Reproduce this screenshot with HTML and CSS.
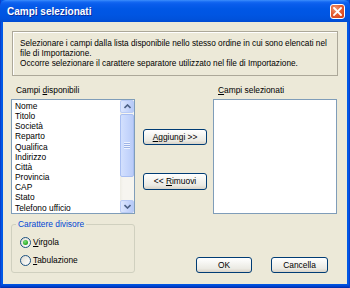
FILE: index.html
```html
<!DOCTYPE html>
<html>
<head>
<meta charset="utf-8">
<link rel="stylesheet" href="styles.css">
</head>
<body>
<div class="window">
  <div class="titlebar">
    <span class="title">Campi selezionati</span>
    <span class="close">
      <svg width="9" height="9" viewBox="0 0 9 9"><path d="M1 1 L8 8 M8 1 L1 8" stroke="#fff" stroke-width="1.8" stroke-linecap="square"/></svg>
    </span>
  </div>
  <div class="client">
    <div class="info">
      Selezionare i campi dalla lista disponibile nello stesso ordine in cui sono elencati nel<br>
      file di Importazione.<br>
      Occorre selezionare il carattere separatore utilizzato nel file di Importazione.
    </div>
    <div class="lists">
      <div class="col">
        <div class="label">Campi <u>d</u>isponibili</div>
        <div class="listbox">
          <ul class="items">
            <li>Nome</li>
            <li>Titolo</li>
            <li>Società</li>
            <li>Reparto</li>
            <li>Qualifica</li>
            <li>Indirizzo</li>
            <li>Città</li>
            <li>Provincia</li>
            <li>CAP</li>
            <li>Stato</li>
            <li>Telefono ufficio</li>
          </ul>
          <div class="scrollbar">
            <div class="sbtn"><svg width="7" height="5" viewBox="0 0 7 5"><path d="M0.5 4 L3.5 1 L6.5 4" fill="none" stroke="#4D6185" stroke-width="1.6"/></svg></div>
            <div class="thumb"><span class="grip"></span></div>
            <div class="track"></div>
            <div class="sbtn"><svg width="7" height="5" viewBox="0 0 7 5"><path d="M0.5 1 L3.5 4 L6.5 1" fill="none" stroke="#4D6185" stroke-width="1.6"/></svg></div>
          </div>
        </div>
      </div>
      <div class="mid">
        <button class="btn add"><u>A</u>ggiungi &gt;&gt;</button>
        <button class="btn remove">&lt;&lt; <u>R</u>imuovi</button>
      </div>
      <div class="col">
        <div class="label"><u>C</u>ampi selezionati</div>
        <div class="listbox"></div>
      </div>
    </div>
    <div class="bottom">
      <fieldset class="group">
        <legend>Carattere divisore</legend>
        <div class="radio"><span class="dot checked"></span><span><u>V</u>irgola</span></div>
        <div class="radio"><span class="dot"></span><span><u>T</u>abulazione</span></div>
      </fieldset>
      <div class="actions">
        <button class="btn ok">OK</button>
        <button class="btn cancel">Cancella</button>
      </div>
    </div>
  </div>
</div>
</body>
</html>
```
FILE: styles.css
```css
html, body {
  margin: 0;
  padding: 0;
  background: #ffffff;
}

.window {
  width: 350px;
  height: 288px;
  box-sizing: border-box;
  padding: 0 3px 4px 3px;
  background: linear-gradient(to bottom, #0058E6 0, #0058E6 284px, #0046D2 286px, #0029A8 288px);
  box-shadow: inset 1px 0 0 #0A3FCC, inset -1px 0 0 #0A3FCC;
  display: flex;
  flex-direction: column;
  font-family: "Liberation Sans", Arial, sans-serif;
  font-size: 8.4px;
  color: #000;
}

.titlebar {
  height: 22px;
  margin: 0 -3px;
  padding: 0 5px 0 7px;
  display: flex;
  align-items: center;
  justify-content: space-between;
  background: linear-gradient(to bottom, #3D8EFC 0, #1468F2 2px, #0A5DEC 4px, #0057E5 9px, #0055E2 15px, #0052DC 19px, #004BD2 22px);
  border-radius: 6px 6px 0 0;
}

.title {
  color: #fff;
  font-weight: bold;
  font-size: 10px;
  line-height: 12px;
  padding-top: 1px;
  text-shadow: 1px 1px 0 #0B2E9E;
}

.close {
  width: 13px;
  height: 13px;
  border: 1px solid #fff;
  border-radius: 3px;
  background: radial-gradient(circle at 35% 30%, #F09A74 0, #E45E33 45%, #D9471E 80%, #C5391A 100%);
  display: flex;
  align-items: center;
  justify-content: center;
  margin-top: 1px;
}

.client {
  flex: 1;
  background: #ECE9D8;
  padding-top: 9px;
  display: flex;
  flex-direction: column;
}

.info {
  margin: 0 9px;
  height: 45px;
  box-sizing: border-box;
  border: 1px solid #ACA899;
  box-shadow: inset 1px 1px 0 #ffffff;
  padding: 7px 0 0 7px;
  font-size: 8.25px;
  line-height: 10.2px;
  white-space: nowrap;
}

.lists {
  display: flex;
  margin: 8px 0 0 8px;
}

.col {
  width: 124px;
  display: flex;
  flex-direction: column;
}

.label {
  line-height: 12px;
  height: 12px;
  padding-left: 5px;
  margin-bottom: 3px;
}

.listbox {
  height: 115px;
  box-sizing: border-box;
  border: 1px solid #7F9DB9;
  background: #fff;
  display: flex;
}

.items {
  flex: 1;
  list-style: none;
  margin: 0;
  padding: 1px 0 0 3px;
  line-height: 10.15px;
  overflow: hidden;
}

.scrollbar {
  width: 14px;
  display: flex;
  flex-direction: column;
  background: linear-gradient(to right, #EEEDE5 0, #F6F5F0 3px, #F6F5F0 100%);
}

.sbtn {
  height: 13px;
  box-sizing: border-box;
  border: 1px solid #B9CBF5;
  border-radius: 2px;
  background: linear-gradient(to right, #DCE6FD 0, #C6D5FB 60%, #B6C9F7 100%);
  display: flex;
  align-items: center;
  justify-content: center;
}

.thumb {
  height: 63px;
  box-sizing: border-box;
  margin-top: 1px;
  border: 1px solid #A9BFF2;
  border-radius: 2px;
  background: linear-gradient(to right, #D3E0FD 0, #C6D6FC 50%, #BACCF8 100%);
  display: flex;
  align-items: center;
  justify-content: center;
}

.grip {
  width: 6px;
  height: 7px;
  background: repeating-linear-gradient(to bottom, #EEF3FF 0, #EEF3FF 1px, #9DB3E6 1px, #9DB3E6 2px);
}

.track {
  flex: 1;
}

.mid {
  width: 64px;
  margin: 0 6px 0 8px;
  display: flex;
  flex-direction: column;
}

.btn {
  font-family: "Liberation Sans", Arial, sans-serif;
  font-size: 8.4px;
  color: #000;
  height: 16px;
  box-sizing: border-box;
  border: 1px solid #003C74;
  border-radius: 3px;
  padding: 0;
  background: linear-gradient(to bottom, #FFFFFF 0, #F7F7F4 30%, #EBEAE3 75%, #D8D3C8 100%);
  line-height: 13px;
  text-align: center;
}

.add {
  margin-top: 45px;
  width: 64px;
}

.remove {
  margin-top: 28px;
  width: 64px;
  height: 17px;
}

.bottom {
  display: flex;
  align-items: flex-end;
  margin: 4px 0 0 8px;
}

.group {
  width: 124px;
  height: 55px;
  box-sizing: border-box;
  margin: 0;
  padding: 3px 0 0 8px;
  border: 1px solid #D0D0BF;
  border-radius: 3px;
}

.group legend {
  color: #0046D5;
  line-height: 12px;
  padding: 0 2px;
  margin-left: -4px;
}

.radio {
  height: 18px;
  display: flex;
  align-items: center;
}

.dot {
  width: 11px;
  height: 11px;
  box-sizing: border-box;
  border: 1px solid #1C5180;
  border-radius: 50%;
  background: linear-gradient(135deg, #DCDBD4 0, #F0EFEA 50%, #FFFFFF 100%);
  margin-right: 2px;
  display: flex;
  align-items: center;
  justify-content: center;
}

.dot.checked::after {
  content: "";
  width: 5px;
  height: 5px;
  border-radius: 50%;
  background: radial-gradient(circle at 40% 35%, #7FE07A 0, #2FB02C 60%, #1C8F1A 100%);
}

.actions {
  margin-left: auto;
  margin-right: 19px;
  display: flex;
  gap: 19px;
  padding-bottom: 0;
}

.ok {
  width: 56px;
}

.cancel {
  width: 57px;
}
```
